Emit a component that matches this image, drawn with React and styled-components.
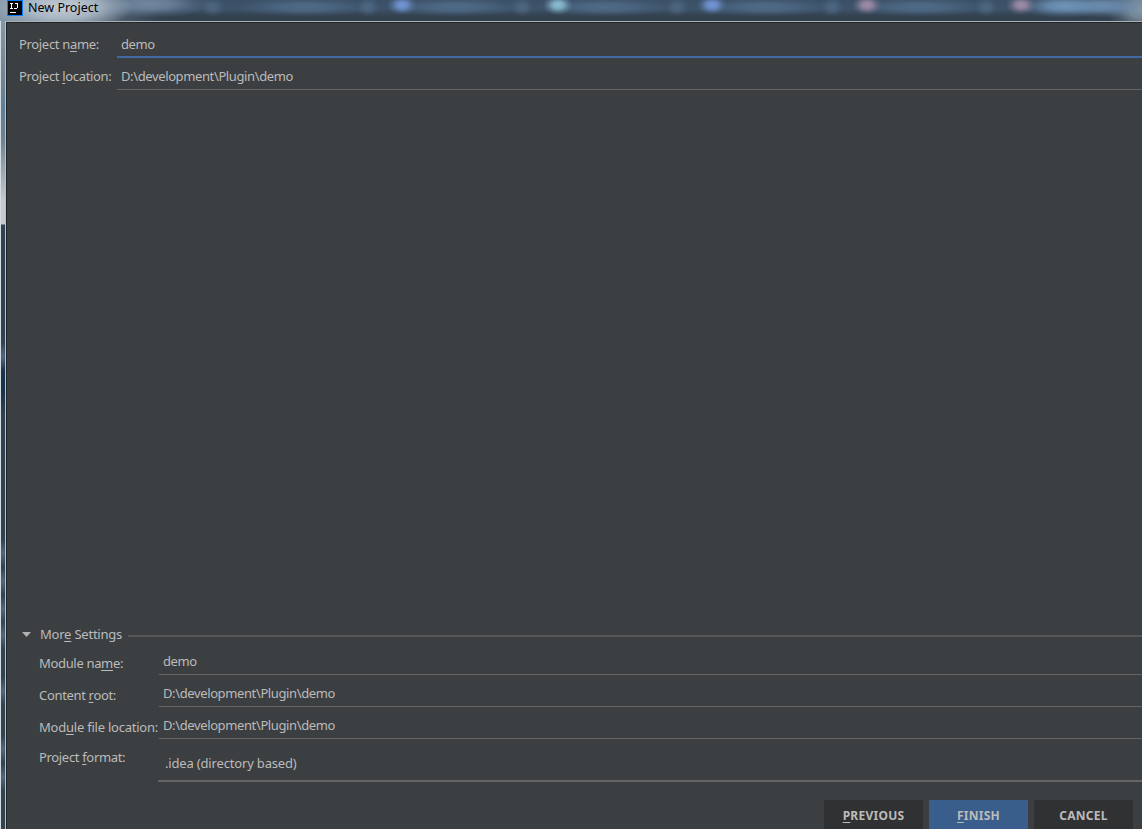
import React from 'react';
import styled, { createGlobalStyle } from 'styled-components';

// tabs of the window behind, seen through the glass title bar
const glow = (x, y, rx, ry, color) =>
  `radial-gradient(ellipse ${rx}px ${ry}px at ${x}px ${y}px, ${color} 0%, ${color}cc 35%, ${color}44 70%, ${color}00 100%)`;

const glassTabs = [
  ...[
    [402, '#7296d8'],
    [558, '#8bbfd2'],
    [712, '#7296d8'],
    [867, '#a18ca8'],
    [1021, '#a18ca8'],
  ].map(([x, color]) => glow(x, 5, 15, 10, color)),
  glow(1064, 6, 46, 12, '#6f94b8'),
  glow(1105, 6, 46, 12, '#6a8bad'),
  glow(1142, 9, 36, 26, '#8397a8'),
  glow(150, 4, 62, 14, '#7187a1'),
  ...[305, 455, 605, 765, 920].map((x) => glow(x, 7, 70, 10, '#4f6a87')),
  ...[213, 368, 522, 677, 832, 986].map((x) => glow(x, 7, 12, 10, '#4d6680')),
].join(',');

const Label = ({ before, mnemonic, after }) => (
  <LabelText>
    {before}
    <Mnemonic>{mnemonic}</Mnemonic>
    {after}
  </LabelText>
);

const IdeaIcon = () => (
  <svg width='16' height='16' viewBox='0 0 16 16' shapeRendering='crispEdges'>
    <rect width='16' height='16' fill='#087cfa' />
    <rect x='1' y='1' width='14' height='14' fill='#000' />
    <path d='M3 3.5h3M4.5 3v5M3 8.5h3M8 3.5h3M10.5 3v5M7 8.5h3' stroke='#fff' fill='none' />
    <rect x='3' y='12' width='6' height='1' fill='#fff' />
  </svg>
);

const App = () => {
  return (
    <>
      <GlobalStyle />
      <Window>
        <TitleBar>
          <IdeaIcon />
          <Title>New Project</Title>
        </TitleBar>
        <Body>
          <Frame />
          <Dialog>
            <ProjectFields>
              <Field $height={35} $label={98} $active>
                <Label before='Project n' mnemonic='a' after='me:' />
                <Value>demo</Value>
              </Field>
              <Field $height={32} $label={98}>
                <Label before='Project ' mnemonic='l' after='ocation:' />
                <Value>D:\development\Plugin\demo</Value>
              </Field>
            </ProjectFields>

            <MoreSettings>
              <SectionHeader>
                <svg width='9' height='5' viewBox='0 0 9 5'>
                  <path d='M0 0h9L4.5 5z' fill='#afb1b3' />
                </svg>
                <Label before='Mor' mnemonic='e' after=' Settings' />
                <Separator />
              </SectionHeader>
              <Settings>
                <Field $height={31} $label={120} $drop={2}>
                  <Label before='Module na' mnemonic='m' after='e:' />
                  <Value>demo</Value>
                </Field>
                <Field $height={32} $label={120} $drop={2}>
                  <Label before='Content ' mnemonic='r' after='oot:' />
                  <Value>D:\development\Plugin\demo</Value>
                </Field>
                <Field $height={32} $label={120} $drop={2} $tracking={-0.23}>
                  <Label before='Mod' mnemonic='u' after='le file location:' />
                  <Value>D:\development\Plugin\demo</Value>
                </Field>
                <FormatRow>
                  <Label before='Project ' mnemonic='f' after='ormat:' />
                  <Select>.idea (directory based)</Select>
                </FormatRow>
              </Settings>
            </MoreSettings>

            <Footer>
              <Button>
                <Mnemonic>P</Mnemonic>REVIOUS
              </Button>
              <Button $primary>
                <Mnemonic>F</Mnemonic>INISH
              </Button>
              <Button>CANCEL</Button>
            </Footer>
          </Dialog>
        </Body>
      </Window>
    </>
  );
};
export default App;

const GlobalStyle = createGlobalStyle`
  * {
    box-sizing: border-box;
  }
  body {
    margin: 0;
    overflow: hidden;
    font-family: 'Noto Sans', 'Open Sans', sans-serif;
    font-size: 13px;
    color: #bbbbbb;
  }
`;

const Window = styled.div`
  width: 1142px;
  height: 829px;
  display: flex;
  flex-direction: column;
  overflow: hidden;
`;

const TitleBar = styled.header`
  display: flex;
  align-items: flex-start;
  height: 21px;
  flex-shrink: 0;
  padding-left: 7px;
  background:
    radial-gradient(ellipse 70px 24px at 63px 7px, #c3ccd6 0%, #b6c1cdcc 50%, #aab6c400 100%),
    linear-gradient(90deg, #8598a9 0, #71859acc 80px, #71859a00 160px),
    ${glassTabs},
    linear-gradient(#3b5066 0, #3d536a 9px, #33414f 16px, #33414e 21px);
`;

const Title = styled.h1`
  margin: 0 0 0 5px;
  font-size: 12.5px;
  font-weight: 400;
  line-height: 16px;
  color: #000;
`;

const Body = styled.div`
  display: flex;
  flex: 1;
  min-height: 0;
`;

const Frame = styled.div`
  width: 5px;
  border-left: 1px solid #d5dde3;
  background:
    radial-gradient(ellipse 6px 14px at 2px 335px, #526b84, transparent),
    radial-gradient(ellipse 8px 32px at 2px 362px, #17324c, #17324c 30%, transparent),
    radial-gradient(ellipse 6px 14px at 2px 532px, #536b81, transparent),
    radial-gradient(ellipse 6px 14px at 2px 560px, #536b81, transparent),
    radial-gradient(ellipse 6px 14px at 2px 588px, #536b81, transparent),
    radial-gradient(ellipse 6px 14px at 2px 614px, #536b81, transparent),
    radial-gradient(ellipse 6px 14px at 2px 670px, #536b81, transparent),
    radial-gradient(ellipse 6px 14px at 2px 728px, #536b81, transparent),
    radial-gradient(ellipse 6px 14px at 2px 756px, #536b81, transparent),
    linear-gradient(#8497a6 0, #6f8394 60px, #5f7f98 88px, #6f8494 120px, #c5cbd0 180px, #c5cbd0 203px, #2e4254 204px, #2f4350 100%);
`;

const Dialog = styled.main`
  flex: 1;
  display: flex;
  flex-direction: column;
  border-top: 1px solid #a9b0b8;
  border-left: 1px solid #b8c1c8;
  background: #3c3f41;
  box-shadow: inset 1px 1px 0 #222527;
`;

const ProjectFields = styled.section`
  padding: 1px 0 0 13px;
`;

const LabelText = styled.span`
  line-height: 18px;
  letter-spacing: -0.33px;
  white-space: pre;
`;

const Field = styled.div`
  display: grid;
  grid-template-columns: ${(props) => props.$label}px 1fr;
  height: ${(props) => props.$height}px;
  align-items: end;
  > ${LabelText} {
    padding-bottom: ${(props) => 5 - (props.$drop || 0)}px;
    ${(props) => (props.$tracking ? `letter-spacing: ${props.$tracking}px;` : '')}
  }
  > :last-child {
    border-bottom: ${(props) => (props.$active ? '2px solid #4269a4' : '1px solid #646464')};
    padding-bottom: ${(props) => (props.$active ? 3 : 4)}px;
  }
`;

const Mnemonic = styled.span`
  text-decoration: underline;
  text-decoration-thickness: 1px;
  text-underline-offset: 2px;
`;

const Value = styled.span`
  padding-left: 4px;
  line-height: 18px;
  letter-spacing: -0.38px;
  white-space: nowrap;
`;

const MoreSettings = styled.section`
  margin-top: auto;
`;

const SectionHeader = styled.div`
  display: flex;
  align-items: center;
  height: 18px;
  padding-left: 16px;
  > svg {
    margin-top: -2px;
  }
  ${LabelText} {
    width: 88px;
    margin: -2px 0 0 9px;
    letter-spacing: -0.22px;
  }
`;

const Separator = styled.div`
  flex: 1;
  height: 2px;
  margin-top: 2px;
  background: #555759;
`;

const Settings = styled.div`
  padding-left: 33px;
`;

const FormatRow = styled.div`
  display: grid;
  grid-template-columns: 119px 1fr;
  height: 43px;
  > ${LabelText} {
    padding-top: 9px;
  }
`;

const Select = styled.div`
  padding: 15px 0 0 7px;
  line-height: 18px;
  letter-spacing: -0.17px;
  border-bottom: 2px solid #646464;
`;

const Footer = styled.footer`
  display: flex;
  justify-content: flex-end;
  gap: 6px;
  height: 47px;
  padding: 18px 9px 0 0;
`;

const Button = styled.button`
  width: 99px;
  border: 0;
  padding: 3px 0 0;
  background: ${(props) => (props.$primary ? '#3a5e8b' : '#303133')};
  color: #bbbbbb;
  font-family: 'Noto Sans', sans-serif;
  font-size: 12px;
  font-weight: 700;
  line-height: 18px;
  letter-spacing: 0.25px;
`;
